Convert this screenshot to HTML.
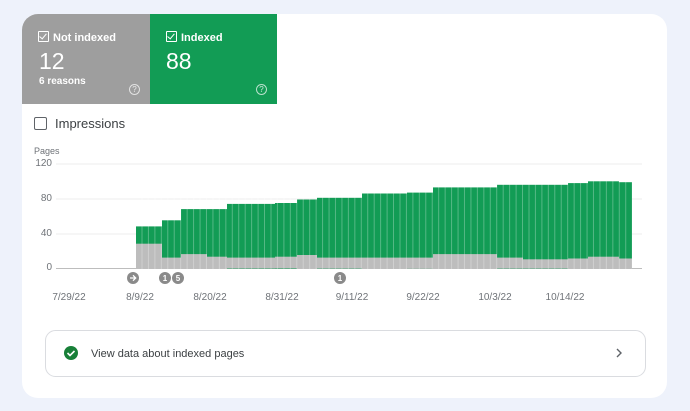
<!DOCTYPE html>
<html><head><style>
body{margin:0;width:690px;height:411px;background:#eef2fb;font-family:"Liberation Sans",Arial,sans-serif;position:relative;overflow:hidden}
.card{position:absolute;left:22px;top:14px;width:645px;height:384px;background:#fff;border-radius:16px;overflow:hidden}
.t{position:absolute;color:#fff}
.lbl{font-size:11px;font-weight:bold}
.cb{display:inline-block;width:9px;height:9px;border:1px solid #fff;border-radius:1px;vertical-align:-1px;margin-right:4px;position:relative}
.cb:after{content:"";position:absolute;left:2px;top:0px;width:3px;height:6px;border:solid #fff;border-width:0 1.5px 1.5px 0;transform:rotate(40deg)}
.big{font-size:23px}
.q{position:absolute;width:9px;height:9px;border:1.2px solid rgba(255,255,255,.7);border-radius:50%;font-size:8px;line-height:9px;text-align:center;color:rgba(255,255,255,.8)}
.ax{position:absolute;font-size:10px;color:#6f7378}
</style></head><body>
<div class="card">
 <div style="position:absolute;left:0;top:0;width:128px;height:90px;background:#9e9e9e"></div>
 <div style="position:absolute;left:128px;top:0;width:127px;height:90px;background:#129c55"></div>
 <div class="t lbl" style="left:16px;top:17px"><span class="cb"></span>Not indexed</div>
 <div class="t big" style="left:17px;top:34px">12</div>
 <div class="t" style="left:17px;top:62px;font-size:10px;font-weight:bold">6 reasons</div>
 <div class="q" style="left:107px;top:70px">?</div>
 <div class="t lbl" style="left:144px;top:17px"><span class="cb"></span>Indexed</div>
 <div class="t big" style="left:144px;top:34px">88</div>
 <div class="q" style="left:234px;top:70px">?</div>
 <div style="position:absolute;left:12px;top:103px;width:11px;height:11px;border:1.5px solid #5f6368;border-radius:2px"></div>
 <div style="position:absolute;left:33px;top:102px;font-size:13px;color:#3c4043">Impressions</div>
 <div class="ax" style="left:12px;top:132px;font-size:9px">Pages</div>
</div>
<div class="ax" style="left:30px;top:158px;width:22px;text-align:right">120</div>
<div class="ax" style="left:30px;top:193px;width:22px;text-align:right">80</div>
<div class="ax" style="left:30px;top:228px;width:22px;text-align:right">40</div>
<div class="ax" style="left:30px;top:262px;width:22px;text-align:right">0</div>
<svg style="position:absolute;left:0;top:0" width="690" height="411">
<defs><pattern id="p" x="136" y="0" width="6.45" height="10" patternUnits="userSpaceOnUse"><rect x="5.6" y="0" width="0.8" height="10" fill="rgba(255,255,255,0.35)"/></pattern></defs>
<g stroke="#eeeeee" stroke-width="1"><line x1="56" y1="164" x2="642" y2="164"/><line x1="56" y1="199" x2="642" y2="199"/><line x1="56" y1="234" x2="642" y2="234"/></g>
<line x1="56" y1="268.5" x2="642" y2="268.5" stroke="#bdbdbd"/>
<g id="bars">
<rect x="136" y="226.4" width="26" height="42" fill="#129c55"/><rect x="136" y="243.7" width="26" height="24.8" fill="#bdbdbd"/>
<rect x="162" y="220.3" width="19" height="48" fill="#129c55"/><rect x="162" y="257.6" width="19" height="10.9" fill="#bdbdbd"/>
<rect x="181" y="209.1" width="26" height="59" fill="#129c55"/><rect x="181" y="254.1" width="26" height="14.4" fill="#bdbdbd"/>
<rect x="207" y="209.1" width="20" height="59" fill="#129c55"/><rect x="207" y="256.7" width="20" height="11.8" fill="#bdbdbd"/>
<rect x="227" y="203.9" width="48" height="65" fill="#129c55"/><rect x="227" y="257.6" width="48" height="10.9" fill="#bdbdbd"/>
<rect x="275" y="203" width="22" height="66" fill="#129c55"/><rect x="275" y="256.7" width="22" height="11.8" fill="#bdbdbd"/>
<rect x="297" y="199.5" width="20" height="69" fill="#129c55"/><rect x="297" y="255" width="20" height="13.5" fill="#bdbdbd"/>
<rect x="317" y="197.8" width="45" height="71" fill="#129c55"/><rect x="317" y="257.6" width="45" height="10.9" fill="#bdbdbd"/>
<rect x="362" y="193.5" width="45" height="75" fill="#129c55"/><rect x="362" y="257.6" width="45" height="10.9" fill="#bdbdbd"/>
<rect x="407" y="192.6" width="26" height="76" fill="#129c55"/><rect x="407" y="257.6" width="26" height="10.9" fill="#bdbdbd"/>
<rect x="433" y="187.4" width="64" height="81" fill="#129c55"/><rect x="433" y="254.1" width="64" height="14.4" fill="#bdbdbd"/>
<rect x="497" y="184.8" width="26" height="84" fill="#129c55"/><rect x="497" y="257.6" width="26" height="10.9" fill="#bdbdbd"/>
<rect x="523" y="184.8" width="45" height="84" fill="#129c55"/><rect x="523" y="259.3" width="45" height="9.2" fill="#bdbdbd"/>
<rect x="568" y="183.1" width="20" height="85" fill="#129c55"/><rect x="568" y="258.5" width="20" height="10" fill="#bdbdbd"/>
<rect x="588" y="181.3" width="31" height="87" fill="#129c55"/><rect x="588" y="256.7" width="31" height="11.8" fill="#bdbdbd"/>
<rect x="619" y="182.2" width="13" height="86" fill="#129c55"/><rect x="619" y="258.5" width="13" height="10" fill="#bdbdbd"/>
</g>
<rect x="136" y="180" width="496" height="89" fill="url(#p)"/>
<g fill="#8a8a8a"><circle cx="133" cy="278" r="6"/><circle cx="165" cy="278" r="6"/><circle cx="178" cy="278" r="6"/><circle cx="340" cy="278" r="6"/></g>
<path d="M130 278h5.5M133 275.3l2.7 2.7-2.7 2.7" stroke="#fff" stroke-width="1.3" fill="none"/>
<g fill="#fff" font-size="8" font-weight="bold" text-anchor="middle" font-family="Liberation Sans"><text x="165" y="281">1</text><text x="178" y="281">5</text><text x="340" y="281">1</text></g>
<g fill="#6f7378" font-size="10" text-anchor="middle" font-family="Liberation Sans"><text x="69" y="300">7/29/22</text><text x="140" y="300">8/9/22</text><text x="210" y="300">8/20/22</text><text x="282" y="300">8/31/22</text><text x="352" y="300">9/11/22</text><text x="423" y="300">9/22/22</text><text x="495" y="300">10/3/22</text><text x="565" y="300">10/14/22</text></g>
<rect x="45.5" y="330.5" width="600" height="46" rx="10" fill="#fff" stroke="#dadce0"/>
<circle cx="71" cy="353" r="7" fill="#188038"/>
<path d="M67.5 353l2.5 2.5 4.5-4.5" stroke="#fff" stroke-width="1.6" fill="none"/>
<text x="91" y="357" font-size="11" fill="#3c4043" font-family="Liberation Sans">View data about indexed pages</text>
<path d="M617 349l4 4-4 4" stroke="#5f6368" stroke-width="1.4" fill="none"/>
</svg>
</body></html>
